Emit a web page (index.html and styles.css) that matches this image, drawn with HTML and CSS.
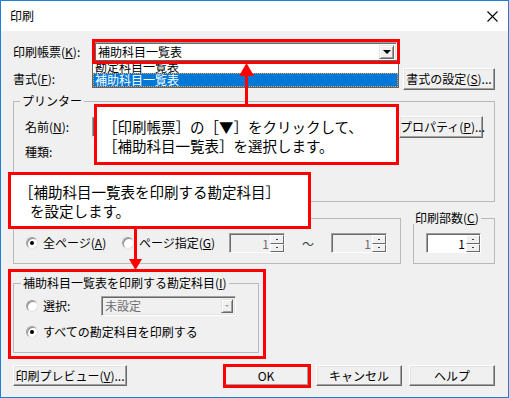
FILE: index.html
```html
<!DOCTYPE html>
<html lang="ja">
<head>
    <meta charset="UTF-8">
    <title>印刷</title>
    <link rel="stylesheet" href="styles.css">
</head>
<body>
<div class="window">
    <div class="titlebar">
        <span class="title">印刷</span>
        <svg class="close" width="11" height="11" viewBox="0 0 11 11">
            <path d="M0.5 0.5L10.5 10.5M10.5 0.5L0.5 10.5" stroke="#000" stroke-width="1.1" fill="none"/>
        </svg>
    </div>

    <div class="dialog">
        <div class="row row-report">
            <span class="label">印刷帳票(<u>K</u>):</span>
            <div class="combo">
                <span class="combo-text">補助科目一覧表</span>
                <span class="combo-btn"><span class="tri"></span></span>
            </div>
        </div>

        <div class="row row-format">
            <span class="label">書式(<u>F</u>):</span>
            <button class="btn btn-format">書式の設定(<u>S</u>)...</button>
        </div>

        <fieldset class="group group-printer">
            <legend>プリンター</legend>
            <div class="row row-name">
                <span class="label label-sub">名前(<u>N</u>):</span>
                <div class="field"></div>
                <button class="btn btn-prop">プロパティ(<u>P</u>)...</button>
            </div>
            <div class="row row-kind">
                <span class="label label-sub">種類:</span>
            </div>
        </fieldset>

        <div class="row row-range">
            <!-- legend of this group is hidden under the callout -->
            <fieldset class="group group-range">
                <legend class="legend-empty"></legend>
                <div class="row row-pages">
                    <span class="option opt-all"><span class="radio checked"></span>全ページ(<u>A</u>)</span>
                    <span class="option opt-page"><span class="radio"></span>ページ指定(<u>G</u>)</span>
                    <div class="spin disabled">
                        <span class="spin-val">1</span>
                        <span class="spin-btns"><span class="spin-btn"></span><span class="spin-btn"></span></span>
                    </div>
                    <span class="tilde">～</span>
                    <div class="spin disabled">
                        <span class="spin-val">1</span>
                        <span class="spin-btns"><span class="spin-btn"></span><span class="spin-btn"></span></span>
                    </div>
                </div>
            </fieldset>
            <fieldset class="group group-copies">
                <legend>印刷部数(<u>C</u>)</legend>
                <div class="row row-pages">
                    <div class="spin spin-copies">
                        <span class="spin-val">1</span>
                        <span class="spin-btns"><span class="spin-btn"></span><span class="spin-btn"></span></span>
                    </div>
                </div>
            </fieldset>
        </div>

        <fieldset class="group group-accounts">
            <legend>補助科目一覧表を印刷する勘定科目(<u>I</u>)</legend>
            <div class="row row-select">
                <span class="option opt-select"><span class="radio"></span>選択:</span>
                <div class="combo combo-disabled">
                    <span class="combo-text">未設定</span>
                    <span class="combo-btn"><span class="tri tri-small"></span></span>
                </div>
            </div>
            <div class="row row-all">
                <span class="option"><span class="radio checked"></span>すべての勘定科目を印刷する</span>
            </div>
        </fieldset>

        <div class="row buttons">
            <button class="btn btn-preview">印刷プレビュー(<u>V</u>)...</button>
            <button class="btn btn-action btn-ok">OK</button>
            <button class="btn btn-action">キャンセル</button>
            <button class="btn btn-action">ヘルプ</button>
        </div>
    </div>

    <!-- open dropdown list -->
    <div class="dropdown">
        <div class="dd-item dd-first">勘定科目一覧表</div>
        <div class="dd-item dd-sel">補助科目一覧表</div>
    </div>

    <!-- annotations -->
    <div class="mark mark-combo"></div>
    <div class="mark mark-accounts"></div>
    <div class="mark mark-ok"></div>

    <svg class="arrow arrow-up" width="15" height="43" viewBox="0 0 15 43">
        <rect x="6" y="10" width="3" height="33" fill="#ff0000"/>
        <polygon points="0,13 7.5,0 15,13" fill="#ff0000"/>
    </svg>
    <svg class="arrow arrow-down" width="13" height="43" viewBox="0 0 13 43">
        <rect x="5" y="0" width="3" height="35" fill="#ff0000"/>
        <polygon points="0,32 6.5,43 13,32" fill="#ff0000"/>
    </svg>

    <div class="callout callout-report">
        <div>［印刷帳票］の［▼］をクリックして、</div>
        <div>［補助科目一覧表］を選択します。</div>
    </div>
    <div class="callout callout-accounts">
        <div>［補助科目一覧表を印刷する勘定科目］</div>
        <div class="indent">を設定します。</div>
    </div>
</div>
</body>
</html>
```

FILE: styles.css
```css
body {
    margin: 0;
    font-family: "Noto Sans CJK JP", sans-serif;
    font-size: 12px;
    color: #000000;
    background-color: #ffffff;
}

u {
    text-decoration-thickness: 1px;
    text-underline-offset: 1px;
}

.window {
    position: relative;
    width: 509px;
    height: 398px;
    box-sizing: border-box;
    border: 1px solid #1c80d6;
    background-color: #f0f0f0;
}

.titlebar {
    height: 30px;
    background-color: #ffffff;
    display: flex;
    align-items: center;
    justify-content: space-between;
    padding: 0 10px 0 9px;
}

.title {
    line-height: 14px;
}

.dialog {
    padding: 0 13px 0 12px;
}

.row {
    display: flex;
    align-items: center;
}

.label {
    width: 81px;
    flex: none;
    line-height: 16px;
    white-space: nowrap;
}

.label-sub {
    width: 67px;
}

/* buttons */
.btn {
    font-family: inherit;
    font-size: 12px;
    color: #000000;
    background-color: #f0f0f0;
    border: 1px solid;
    border-color: #ffffff #696969 #696969 #ffffff;
    box-shadow: inset -1px -1px 0 #a0a0a0, inset 1px 1px 0 #e3e3e3;
    padding: 0;
    margin: 0;
    height: 22px;
    line-height: 16px;
    white-space: nowrap;
    box-sizing: border-box;
}

/* combo box */
.combo {
    width: 303px;
    height: 20px;
    box-sizing: border-box;
    display: flex;
    align-items: center;
    background-color: #ffffff;
    border: 1px solid;
    border-color: #a0a0a0 #ffffff #ffffff #a0a0a0;
    box-shadow: inset 1px 1px 0 #696969, inset -1px -1px 0 #e3e3e3;
    padding: 2px 2px 2px 2px;
}

.combo-text {
    flex: 1;
    line-height: 14px;
    padding-left: 1px;
    white-space: nowrap;
}

.combo-btn {
    width: 15px;
    height: 14px;
    box-sizing: border-box;
    display: flex;
    align-items: center;
    justify-content: center;
    background-color: #f0f0f0;
    border: 1px solid;
    border-color: #e3e3e3 #696969 #696969 #e3e3e3;
    box-shadow: inset 1px 1px 0 #ffffff, inset -1px -1px 0 #a0a0a0;
}

.tri {
    width: 0;
    height: 0;
    border-left: 4px solid transparent;
    border-right: 4px solid transparent;
    border-top: 4px solid #000000;
}

.tri-small {
    border-left-width: 2px;
    border-right-width: 2px;
    border-top: 2px solid #a0a0a0;
}

.combo-disabled {
    width: 135px;
    background-color: #f0f0f0;
    color: #6d6d6d;
}

.combo-disabled .combo-btn {
    width: 12px;
}

.row-report {
    margin-top: 11px;
    height: 20px;
}

.row-format {
    margin-top: 6px;
    height: 22px;
}

.btn-format {
    width: 92px;
    margin-left: auto;
}

/* group boxes */
.group {
    margin: 0;
    padding: 0 11px;
    border: 1px solid #b9b9b9;
    box-sizing: border-box;
    min-width: 0;
}

.group legend {
    padding: 0 2px;
    margin-left: -5px;
    line-height: 12px;
    white-space: nowrap;
}

.group .legend-empty {
    height: 12px;
    width: 50px;
}

.group-printer {
    margin-top: 5px;
    height: 107px;
    padding-top: 9px;
}

.row-name {
    height: 22px;
}

.field {
    width: 298px;
    height: 20px;
    box-sizing: border-box;
    background-color: #f0f0f0;
    border: 1px solid;
    border-color: #a0a0a0 #ffffff #ffffff #a0a0a0;
    box-shadow: inset 1px 1px 0 #696969;
}

.btn-prop {
    width: 84px;
    margin-left: auto;
}

.row-kind {
    margin-top: 6px;
    height: 16px;
}

.row-range {
    margin-top: 10px;
    align-items: flex-start;
    justify-content: space-between;
}

.group-range {
    width: 388px;
    height: 52px;
    padding-top: 9px;
    padding-left: 12px;
}

.group-copies {
    width: 82px;
    height: 52px;
    padding-top: 9px;
    padding-left: 12px;
}

.group-copies legend {
    margin-left: -13px;
}

.row-pages {
    height: 20px;
}

.option {
    display: flex;
    align-items: center;
    flex: none;
    line-height: 16px;
    white-space: nowrap;
}

.opt-all {
    width: 96px;
}

.opt-page {
    width: 107px;
}

.opt-select {
    width: 75px;
}

.radio {
    width: 12px;
    height: 12px;
    box-sizing: border-box;
    border-radius: 50%;
    border: 1px solid;
    border-color: #a0a0a0 #e3e3e3 #e3e3e3 #a0a0a0;
    box-shadow: inset 1px 1px 0 #909090;
    background-color: #ffffff;
    display: flex;
    align-items: center;
    justify-content: center;
    margin-right: 5px;
    flex: none;
}

.radio.checked::after {
    content: "";
    width: 4px;
    height: 4px;
    border-radius: 50%;
    background-color: #000000;
}

/* spin boxes */
.spin {
    width: 56px;
    height: 20px;
    box-sizing: border-box;
    display: flex;
    background-color: #ffffff;
    border: 1px solid;
    border-color: #a0a0a0 #ffffff #ffffff #a0a0a0;
    box-shadow: inset 1px 1px 0 #696969;
    padding: 1px 0 0 1px;
}

.spin.disabled {
    background-color: #f0f0f0;
    color: #6d6d6d;
}

.spin-copies {
    width: 55px;
}

.spin-val {
    flex: 1;
    text-align: right;
    line-height: 17px;
    padding-right: 1px;
}

.spin-btns {
    width: 14px;
    display: flex;
    flex-direction: column;
}

.spin-btn {
    flex: 1;
    background-color: #f0f0f0;
    border: 1px solid;
    border-color: #ffffff #696969 #696969 #ffffff;
    display: flex;
    align-items: center;
    justify-content: center;
}

.spin-btn::after {
    content: "";
    width: 2px;
    height: 1px;
    background-color: #404040;
}

.tilde {
    width: 46px;
    text-align: center;
    flex: none;
    color: #404040;
}

.group-accounts {
    margin-top: 13px;
    width: 246px;
    height: 76px;
    padding-top: 7px;
    padding-left: 12px;
}

.row-select {
    height: 20px;
}

.row-all {
    margin-top: 8px;
    height: 16px;
}

.buttons {
    margin-top: 12px;
    gap: 7px;
}

.buttons .btn {
    height: 21px;
}

.btn-preview {
    width: 114px;
}

.btn-action {
    width: 86px;
}

.btn-ok {
    margin-left: auto;
}

/* dropdown list */
.dropdown {
    position: absolute;
    left: 91px;
    top: 59px;
    width: 307px;
    height: 28px;
    box-sizing: border-box;
    border: 1px solid #646464;
    background-color: #ffffff;
    overflow: hidden;
    z-index: 1;
}

.dd-item {
    line-height: 12px;
    padding-left: 2px;
    white-space: nowrap;
}

.dd-first {
    height: 12px;
    overflow: hidden;
}

.dd-sel {
    box-sizing: border-box;
    background-color: #0078d7;
    color: #ffffff;
    border: 1px dotted #f0a040;
    height: 14px;
    line-height: 12px;
    padding-left: 1px;
}

/* annotations */
.mark {
    position: absolute;
    border: 3px solid #ff0000;
    box-sizing: border-box;
    z-index: 2;
}

.mark-combo {
    left: 91px;
    top: 38px;
    width: 308px;
    height: 25px;
}

.mark-accounts {
    left: 7px;
    top: 268px;
    width: 258px;
    height: 90px;
}

.mark-ok {
    left: 222px;
    top: 363px;
    width: 88px;
    height: 24px;
}

.arrow {
    position: absolute;
    z-index: 3;
}

.arrow-up {
    left: 238px;
    top: 62px;
}

.arrow-down {
    left: 128px;
    top: 226px;
}

.callout {
    position: absolute;
    box-sizing: border-box;
    border: 3px solid #ff0000;
    background-color: #ffffff;
    font-size: 14.5px;
    line-height: 19px;
    white-space: nowrap;
    z-index: 3;
}

.callout-report {
    left: 93px;
    top: 103px;
    width: 305px;
    height: 61px;
    padding: 10px 0 0 6px;
}

.callout-accounts {
    left: 7px;
    top: 171px;
    width: 303px;
    height: 57px;
    padding: 7px 0 0 8px;
}

.indent {
    padding-left: 11px;
}
```
